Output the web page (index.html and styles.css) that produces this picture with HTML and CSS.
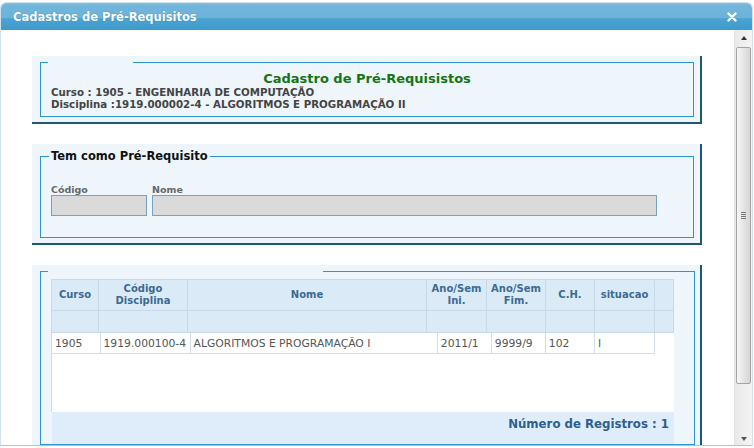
FILE: index.html
```html
<!DOCTYPE html>
<html>
<head>
  <title>Cadastros de Pré-Requisitos</title>
  <link rel="stylesheet" href="styles.css">
</head>
<body>
  <div class="dialog">
    <div class="dialog-header">
      <span class="dialog-title">Cadastros de Pré-Requisitos</span>
      <svg class="close" width="10" height="10" viewBox="0 0 10 10">
        <path d="M1.5 1.5 L8.5 8.5 M8.5 1.5 L1.5 8.5" stroke="#fff" stroke-width="2.4" stroke-linecap="round"/>
      </svg>
    </div>

    <div class="dialog-body">
      <div class="content">

        <div class="panel">
          <fieldset class="box box-info">
            <legend class="gap gap-short"></legend>
            <h1>Cadastro de Pré-Requisistos</h1>
            <p>Curso : 1905 - ENGENHARIA DE COMPUTAÇÃO</p>
            <p>Disciplina :1919.000002-4 - ALGORITMOS E PROGRAMAÇÃO II</p>
          </fieldset>
        </div>

        <div class="panel panel-form">
          <fieldset class="box box-form">
            <legend class="caption">Tem como Pré-Requisito</legend>
            <div class="fields">
              <div class="field">
                <label>Código</label>
                <input type="text" class="input-code" disabled>
              </div>
              <div class="field">
                <label>Nome</label>
                <input type="text" class="input-name" disabled>
              </div>
            </div>
          </fieldset>
        </div>

        <div class="panel panel-grid">
          <fieldset class="box box-grid">
            <legend class="gap gap-long"></legend>
            <div class="grid">
              <table class="grid-head">
                <colgroup>
                  <col class="h1"><col class="h2"><col class="h3"><col class="h4">
                  <col class="h5"><col class="h6"><col class="h7"><col class="h8">
                </colgroup>
                <tr class="titles">
                  <th>Curso</th>
                  <th>Código<br>Disciplina</th>
                  <th>Nome</th>
                  <th>Ano/Sem<br>Ini.</th>
                  <th>Ano/Sem<br>Fim.</th>
                  <th>C.H.</th>
                  <th>situacao</th>
                  <th class="spacer"></th>
                </tr>
                <tr class="filters">
                  <th></th><th></th><th></th><th></th>
                  <th></th><th></th><th></th><th class="spacer"></th>
                </tr>
              </table>
              <div class="grid-body">
                <table class="grid-rows">
                  <colgroup>
                    <col class="d1"><col class="d2"><col class="d3"><col class="d4">
                    <col class="d5"><col class="d6"><col class="d7">
                  </colgroup>
                  <tr>
                    <td>1905</td>
                    <td>1919.000100-4</td>
                    <td>ALGORITMOS E PROGRAMAÇÃO I</td>
                    <td>2011/1</td>
                    <td>9999/9</td>
                    <td>102</td>
                    <td>I</td>
                  </tr>
                </table>
              </div>
              <div class="grid-footer">Número de Registros : 1</div>
            </div>
          </fieldset>
        </div>

      </div>

      <div class="scrollbar">
        <span class="arrow arrow-up"></span>
        <div class="thumb"><span class="grip"></span></div>
        <span class="arrow arrow-down"></span>
      </div>
    </div>
  </div>
</body>
</html>
```

FILE: styles.css
```css
body {
  margin: 0;
  background: #fff;
  font-family: "DejaVu Sans", Verdana, sans-serif;
  color: #444;
}

.dialog {
  margin: 2px 1px 0 0;
  border: 1px solid #cfe3ef;
  border-bottom-color: #b9c0c6;
  border-radius: 6px 6px 0 0;
  overflow: hidden;
}

/* title bar */
.dialog-header {
  height: 27px;
  display: flex;
  align-items: center;
  justify-content: space-between;
  padding: 0 15px 0 12px;
  border-radius: 5px 5px 0 0;
  background: linear-gradient(to bottom, #86c3e3 0, #72b6dc 8%, #6cb2d9 55%, #4ba3d2 58%, #3d9acb 100%);
}
.dialog-title {
  color: #fff;
  font-weight: bold;
  font-size: 11.5px;
  text-shadow: 0 0 1px rgba(20, 70, 110, 0.5);
}
.close { display: block; }

.dialog-body {
  height: 415px;
  display: flex;
}
.content {
  flex: 1;
  overflow: hidden;
  padding: 26px 0 0 31px;
}

/* fake scrollbar */
.scrollbar {
  width: 17px;
  display: flex;
  flex-direction: column;
  align-items: center;
  background: linear-gradient(to right, #e9e9e9, #f4f4f4);
  border-left: 1px solid #e2e2e2;
}
.arrow {
  width: 0;
  height: 0;
  border-left: 3px solid transparent;
  border-right: 3px solid transparent;
}
.arrow-up { border-bottom: 4px solid #333; margin: 6px 0 7px; }
.arrow-down { border-top: 4px solid #555; margin-top: auto; margin-bottom: 4px; }
.thumb {
  width: 13px;
  height: 335px;
  border: 1px solid #a3a3a3;
  border-radius: 2px;
  background: linear-gradient(to right, #f6f6f6, #e2e2e2 60%, #d6d6d6);
  display: flex;
  align-items: center;
  justify-content: center;
}
.grip {
  width: 5px;
  height: 7px;
  background: repeating-linear-gradient(to bottom, #777 0, #777 1px, transparent 1px, transparent 2px);
}

/* panels */
.panel {
  width: 670px;
  box-sizing: border-box;
  background: #eef6fc;
  border-right: 2px solid #1f5773;
  border-bottom: 2px solid #1f5773;
  padding: 0 6px 5px 8px;
  margin-bottom: 20px;
}
.panel-form { padding-top: 5px; }

.box {
  margin: 0;
  border: 1px solid #2c95cf;
  padding: 0 10px 6px 10px;
}
.gap {
  height: 12px;
  padding: 0;
  margin-left: -3px;
}
.gap-short { width: 85px; }
.gap-long { width: 275px; }

.caption {
  font-size: 11.5px;
  font-weight: bold;
  color: #111;
  line-height: 15px;
  padding: 0 2px;
  margin-left: -2px;
}

.box-info h1 {
  margin: 3px 0 0;
  text-align: center;
  color: #157515;
  font-size: 13px;
  line-height: 15px;
}
.box-info p {
  margin: 0;
  font-size: 10.25px;
  font-weight: bold;
  line-height: 12px;
  color: #444;
}

.box-form { padding-bottom: 21px; }
.fields {
  display: flex;
  gap: 5px;
  margin-top: 20px;
}
.field {
  display: flex;
  flex-direction: column;
}
.field label {
  font-size: 9.5px;
  font-weight: bold;
  color: #666;
  line-height: 11px;
}
.field input {
  box-sizing: border-box;
  height: 21px;
  margin: 0;
  border: 1px solid #76a2bf;
  background: #dadada;
}
.input-code { width: 96px; }
.input-name { width: 505px; }

/* grid */
.box-grid { padding: 0 20px 0 10px; }
.grid { margin-top: 2px; }
.grid table {
  border-collapse: collapse;
  table-layout: fixed;
}
.grid-head {
  width: 622px;
  background: #dbeaf7;
}
.grid-head th {
  border: 1px solid #c7d8e8;
  color: #3b6a92;
  font-size: 10px;
  line-height: 12px;
  font-weight: bold;
  padding: 0;
}
.grid-head .titles th { height: 30px; }
.grid-head .filters th { height: 21px; }
.grid-head .spacer { border-left-color: #d3e1ee; }

.h1 { width: 47px; } .h2 { width: 89px; } .h3 { width: 239px; } .h4 { width: 60px; }
.h5 { width: 59px; } .h6 { width: 49px; } .h7 { width: 60px; } .h8 { width: 19px; }

.grid-body {
  height: 79px;
  background: #fff;
  border-left: 1px solid #d3dbe3;
}
.grid-rows { width: 603px; }
.grid-rows td {
  height: 20px;
  padding: 0 0 0 3px;
  border: 1px solid #d5dde5;
  border-top: none;
  font-size: 10.75px;
  color: #555;
  white-space: nowrap;
  overflow: hidden;
}
.grid-rows td:first-child { border-left: none; }

.d1 { width: 48px; } .d2 { width: 90px; } .d3 { width: 247px; } .d4 { width: 54px; }
.d5 { width: 54px; } .d6 { width: 49px; } .d7 { width: 60px; }

.grid-footer {
  height: 32px;
  box-sizing: border-box;
  padding: 2px 5px 0 0;
  background: #deedf9;
  text-align: right;
  font-size: 11.75px;
  font-weight: bold;
  color: #2e5e8c;
  line-height: 20px;
  margin-left: 1px;
}
```
